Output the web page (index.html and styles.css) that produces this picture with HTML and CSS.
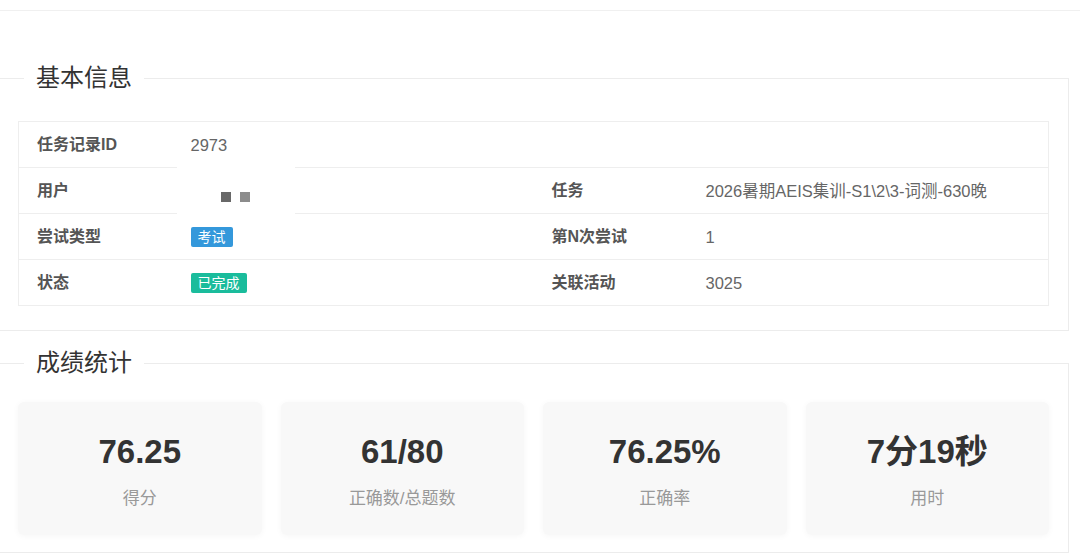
FILE: index.html
```html
<!DOCTYPE html>
<html lang="zh-CN">
<head>
<meta charset="utf-8">
<title>任务记录详情</title>
<link rel="stylesheet" href="styles.css">
</head>
<body>
<div class="topbar"></div>
<fieldset class="panel panel-info">
  <legend class="panel-title">基本信息</legend>
  <table class="info-table">
    <colgroup>
      <col class="col-lbl">
      <col class="col-val">
      <col class="col-lbl">
      <col>
    </colgroup>
    <tbody>
      <tr>
        <td class="lbl">任务记录ID</td>
        <td class="val" colspan="3">2973</td>
      </tr>
      <tr>
        <td class="lbl">用户</td>
        <td class="val user-cell">
          <span class="mask"></span>
          <span class="sq sq-a"></span><span class="sq sq-b"></span>
        </td>
        <td class="lbl">任务</td>
        <td class="val">2026暑期AEIS集训-S1\2\3-词测-630晚</td>
      </tr>
      <tr>
        <td class="lbl">尝试类型</td>
        <td class="val"><span class="badge badge-blue">考试</span></td>
        <td class="lbl">第N次尝试</td>
        <td class="val">1</td>
      </tr>
      <tr>
        <td class="lbl">状态</td>
        <td class="val"><span class="badge badge-green">已完成</span></td>
        <td class="lbl">关联活动</td>
        <td class="val">3025</td>
      </tr>
    </tbody>
  </table>
</fieldset>
<fieldset class="panel panel-stats">
  <legend class="panel-title">成绩统计</legend>
  <div class="stats">
    <div class="stat"><div class="stat-num">76.25</div><div class="stat-lbl">得分</div></div>
    <div class="stat"><div class="stat-num">61/80</div><div class="stat-lbl">正确数/总题数</div></div>
    <div class="stat"><div class="stat-num">76.25%</div><div class="stat-lbl">正确率</div></div>
    <div class="stat"><div class="stat-num">7分19秒</div><div class="stat-lbl">用时</div></div>
  </div>
</fieldset>
</body>
</html>
```
FILE: styles.css
```css
html, body {
  margin: 0;
  padding: 0;
  background: #ffffff;
  font-family: "Liberation Sans", "Noto Sans CJK SC", sans-serif;
  color: #333;
  overflow: hidden;
}

.topbar {
  height: 10px;
  border-bottom: 1px solid #f0f0f0;
}

.panel {
  margin: 0 11px 0 -1px;
  border: 1px solid #ececec;
  min-width: 0;
}

.panel-info {
  margin-top: 52px;
  padding: 28px 19px 24px 18px;
}

.panel-stats {
  margin-top: 17px;
  padding: 24px 19px 17px 18px;
}

.panel-title {
  margin-left: 6px;
  padding: 0 12px;
  font-size: 24px;
  line-height: 30px;
  color: #333;
  font-weight: normal;
}

.info-table {
  width: 100%;
  border-collapse: collapse;
  border: 1px solid #eeeeee;
  table-layout: fixed;
}

.col-lbl { width: 154px; }
.col-val { width: 361px; }

.info-table td {
  height: 45px;
  padding: 0 18px;
  border-bottom: 1px solid #eeeeee;
  font-size: 16px;
  line-height: 20px;
  vertical-align: middle;
  white-space: nowrap;
}

.lbl {
  font-weight: bold;
  color: #555;
}

.info-table td.val {
  color: #666;
  font-size: 16.5px;
}

.user-cell {
  position: relative;
}

.mask {
  position: absolute;
  left: 4px;
  top: -2px;
  width: 118px;
  height: 49px;
  background: #ffffff;
}

.sq {
  position: absolute;
  top: 24px;
  width: 10px;
  height: 10px;
}

.sq-a { left: 48px; background: #686868; }
.sq-b { left: 67px; background: #8c8c8c; }

.badge {
  display: inline-block;
  padding: 0 7px;
  font-size: 14px;
  line-height: 20px;
  color: #ffffff;
  border-radius: 2px;
  vertical-align: middle;
}

.badge-blue { background: #3498db; }
.badge-green { background: #1abc9c; }

.stats {
  display: grid;
  grid-template-columns: repeat(4, 1fr);
  gap: 19px;
}

.stat {
  background: #f8f8f8;
  border-radius: 6px;
  box-shadow: 0 1px 6px rgba(0, 0, 0, 0.04);
  padding: 30px 0 24px;
  text-align: center;
}

.stat-num {
  font-size: 33px;
  line-height: 40px;
  font-weight: bold;
  color: #333;
}

.stat-lbl {
  margin-top: 15px;
  font-size: 17px;
  line-height: 24px;
  color: #999;
}
```
